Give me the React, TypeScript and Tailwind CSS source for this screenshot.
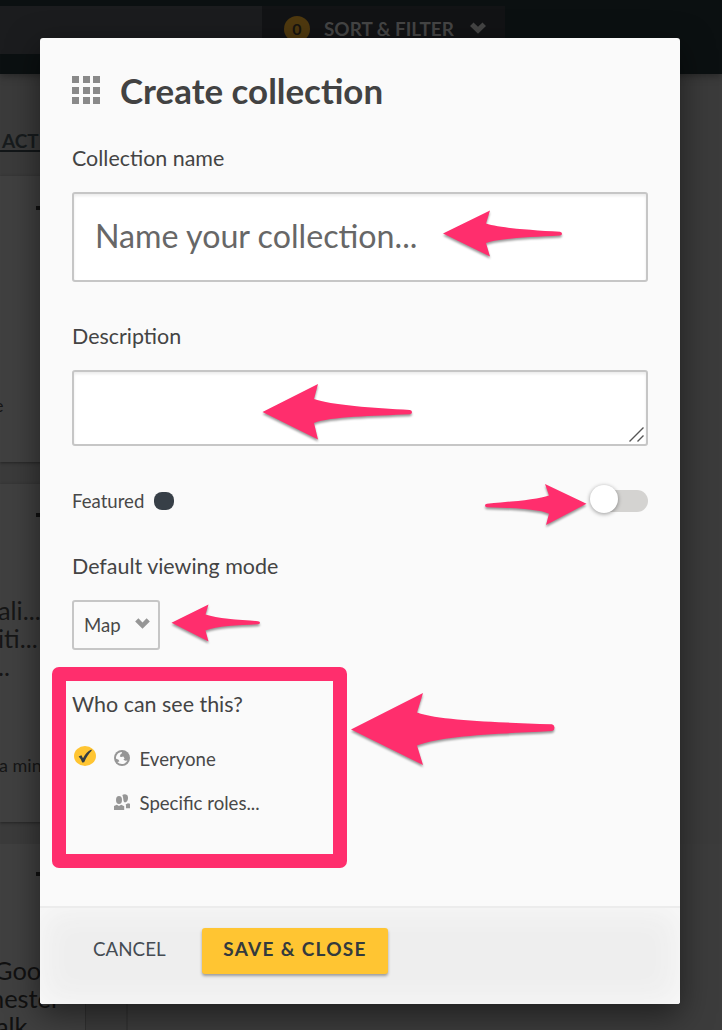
import type { ReactNode } from "react";

const arrowDrop = "absolute overflow-visible drop-shadow-[0_2px_1px_rgba(0,0,0,0.4)]";

function Arrow({ d, className }: { d: string; className: string }) {
  return (
    <svg className={`${arrowDrop} ${className}`} aria-hidden="true">
      <path d={d} fill="#ff2e6d" />
    </svg>
  );
}

function Label({ children, className = "" }: { children: ReactNode; className?: string }) {
  return <div className={`h-7 whitespace-nowrap text-[21.45px] leading-7 text-[#444] ${className}`}>{children}</div>;
}

function Chevron({ className }: { className: string }) {
  return (
    <svg viewBox="0 0 16 12" className={className}>
      <path d="M0 3.9 3.5 0.4 8 4.8 12.5 0.4 16 3.9 8 11.8Z" fill="currentColor" />
    </svg>
  );
}

function Backdrop() {
  return (
    <div className="flex h-full flex-col bg-[#3b3b3b] text-[#161616]">
      <header className="flex h-[74px] shrink-0 bg-[#0b1011] pt-[6px] shadow-[0_2px_8px_rgba(0,0,0,0.35)]">
        <div className="h-12 w-[262px] bg-[#1b1c1e]" />
        <div className="flex h-12 w-[243px] items-center bg-[#121315] pb-[3px] pl-[22px] text-[#454545]">
          <span className="flex h-[26px] w-[26px] items-center justify-center rounded-full bg-[#4f390f] text-[16px] font-bold text-[#171410]">0</span>
          <span className="ml-[14px] whitespace-nowrap pt-[2px] text-[18.9px] font-bold">SORT &amp; FILTER</span>
          <Chevron className="mb-[2px] ml-[16px] h-3 w-4" />
        </div>
      </header>
      <div className="h-[102px] shrink-0 pt-[56px]">
        <div className="h-[22px] w-[86px] border-b-2 border-[#121618] pl-[2px] text-[19px] font-bold leading-[22px] text-[#171b1d]">ACT</div>
      </div>
      <section className="h-[286px] w-[86px] shrink-0 bg-[#404040] pt-[30px] shadow-[0_1px_3px_rgba(0,0,0,0.4)]">
        <div className="ml-9 h-1 w-6 bg-[#111]" />
        <div className="-ml-[6px] mt-[183px] text-[18px] leading-6">e</div>
      </section>
      <section className="mt-[22px] h-[338px] w-[86px] shrink-0 bg-[#404040] pt-[29px] shadow-[0_1px_3px_rgba(0,0,0,0.4)]">
        <div className="ml-9 h-1 w-6 bg-[#111]" />
        <div className="mt-[79px] whitespace-nowrap text-[25.4px] leading-7">
          <div className="-ml-[2px]">ali...</div>
          <div className="-ml-[2px]">iti...</div>
          <div className="-ml-[8px]">...</div>
        </div>
        <div className="-ml-px mt-[73px] whitespace-nowrap text-[18px] leading-6">a min</div>
      </section>
      <div className="mt-[22px] flex h-[186px] shrink-0">
        <section className="w-[86px] shrink-0 border-r border-[#303030] bg-[#404040] pt-[28px]">
          <div className="ml-9 h-1 w-6 bg-[#111]" />
          <div className="mt-[80px] whitespace-nowrap text-[25.4px] leading-7 text-[#111]">
            <div className="-ml-[6px]">Goo</div>
            <div className="-ml-[10px]">hester</div>
            <div className="-ml-[4px]">alk</div>
          </div>
        </section>
        <section className="ml-[40px] flex-1 border-l-2 border-[#343434] bg-[#3c3c3c]" />
      </div>
    </div>
  );
}

export default function App() {
  return (
    <div className="relative h-[1030px] w-[722px] overflow-hidden font-['Lato','Carlito',sans-serif]">
      <Backdrop />
      <div role="dialog" className="absolute left-10 top-[38px] flex h-[966px] w-[640px] flex-col rounded-[3px] bg-[#fafafa] shadow-[0_10px_32px_rgba(0,0,0,0.5)]">
        <div className="flex h-[868px] flex-col px-8">
          <div className="mt-[30px] flex h-12 items-center">
            <div className="mb-1 grid grid-cols-3 gap-[3.5px]">
              {Array.from({ length: 9 }, (_, i) => (
                <span key={i} className="h-[7px] w-[7px] bg-[#898989]" />
              ))}
            </div>
            <h1 className="mb-[2px] ml-5 whitespace-nowrap text-[34.9px] font-bold leading-[48px] text-[#424242]">Create collection</h1>
          </div>

          <Label className="mt-[28px]">Collection name</Label>
          <div className="mt-5 flex h-[90px] items-center rounded-[3px] border-2 border-[#c6c6c6] bg-white pb-[2px] pl-[21px] text-[32.2px] text-[#676767] shadow-[inset_0_2px_3px_rgba(0,0,0,0.08)]">
            Name your collection...
          </div>

          <Label className="mt-10">Description</Label>
          <div className="mt-5 flex h-[76px] items-end justify-end rounded-[3px] border-2 border-[#c6c6c6] bg-white p-[2px] shadow-[inset_0_2px_3px_rgba(0,0,0,0.08)]">
            <svg viewBox="0 0 15 15" className="h-[15px] w-[15px]" stroke="#555" strokeWidth="1.4">
              <path d="M0.5 14.5 14.5 0.5M8.5 14.5 14.5 8.5" />
            </svg>
          </div>

          <div className="mt-[41px] flex h-7 items-center text-[18.6px] text-[#484848]">
            <span className="pt-[2px]">Featured</span>
            <span className="ml-[10px] h-[18px] w-5 rounded-[8px] bg-[#373f47]" />
            <div className="ml-auto flex h-[22px] w-14 items-center rounded-full bg-[#d4d3d1]">
              <span className="-ml-[2px] -mt-[4px] h-7 w-7 shrink-0 rounded-full bg-white shadow-[0_1px_4px_rgba(0,0,0,0.4)]" />
            </div>
          </div>

          <Label className="mt-[37px]">Default viewing mode</Label>
          <div className="mt-5 flex h-[50px] w-[88px] items-center rounded-[3px] border-2 border-[#c6c6c6] pl-[10px] text-[18.6px] text-[#484848]">
            <span className="pt-[2px]">Map</span>
            <Chevron className="mb-1 ml-[14px] h-[11px] w-[15px] text-[#969696]" />
          </div>

          <Label className="mt-10">Who can see this?</Label>
          <div className="mt-[19px] text-[18.6px] text-[#484848]">
            <div className="flex h-11 items-center">
              <span className="mb-[6px] ml-[2px] flex h-5 w-[22px] items-center justify-center rounded-[50%] bg-[#ffc532]">
                <svg viewBox="0 0 14 14" className="h-[14px] w-[14px]">
                  <path d="M0.6 7.4 3.4 6.2 5 9.2C7 5.4 9.6 2 13.4.5L13.8 1.4C10.7 4.5 8.2 8.4 6.2 13.2L4.2 13.4C3.5 11.2 2.4 9.2 .6 7.4Z" fill="#333d44" />
                </svg>
              </span>
              <svg viewBox="0 0 16 16" className="mb-[3px] ml-[18px] h-4 w-4">
                <circle cx="8" cy="8" r="8" fill="#969696" />
                <path d="M7.6 2 8.2 3 6.6 4.2 5.8 6.4 7.2 7 9.4 6.6 10.6 8.6 9.4 9.8 11.4 10.8 13.4 10.6C12.2 13 10.2 14 8 14 6 14 4.4 13.2 3.4 12L5.4 11.6 4.6 9.8 2.1 8.8C1.6 5.4 4.2 2.2 7.6 2Z" fill="#fafafa" />
              </svg>
              <span className="ml-[9.5px] pt-[2px]">Everyone</span>
            </div>
            <div className="flex h-11 items-center">
              <svg viewBox="0 0 16 16" className="mb-[3px] ml-[42px] h-4 w-4" fill="#969696">
                <ellipse cx="5" cy="6" rx="3" ry="4" />
                <path d="M8.3 1C10 0 13.8-.4 14 3.4 14.2 6.5 12.8 8.4 11 8.4 9.6 8 9.4 6.8 9.3 5.2 9.2 3.5 8.7 2 8.3 1Z" />
                <path d="M0 16V12L2.8 10.8 5 12 7.2 10.8 10.2 12.2V16ZM12 14.2V11.4L11.6 10.6 14 9.2 16 9.8V14.2Z" />
              </svg>
              <span className="ml-[9.5px] whitespace-nowrap pt-[2px]">Specific roles...</span>
            </div>
          </div>
        </div>

        <footer className="flex h-[98px] items-start rounded-b-[3px] border-t-2 border-[#ececec] bg-[#eeeeee] pl-[53px] pt-5 shadow-[inset_0_0_32px_#fafafa]">
          <button className="h-[43px] w-[73px] whitespace-nowrap text-left text-[18.8px] text-[#454c53]">CANCEL</button>
          <button className="ml-9 h-[46px] w-[186px] whitespace-nowrap rounded-[3px] bg-[#ffc532] pb-1 text-[19px] font-bold tracking-[1.3px] text-[#343a3d] shadow-[0_2px_3px_rgba(0,0,0,0.35)]">
            SAVE &amp; CLOSE
          </button>
        </footer>
      </div>

      <div className="absolute left-[52px] top-[667px] h-[201px] w-[295px] rounded-[7px] border-[14px] border-[#ff2e6d]" />
      <Arrow className="left-[443px] top-[210px] h-[48px] w-[119px]" d="M0 23.5 47 0.5 43 13.5C56 18 88 20 117 21.7Q119 22 119 23.7 119 25.2 117 25.4C88 27 56 28 43 33L47 46.5Z" />
      <Arrow className="left-[262px] top-[383px] h-[57px] w-[150px]" d="M0.5 29 56 1 52 16C68 22 112 25 148 27Q150 27.5 150 29.3 150 31 148 31.3C112 33 68 33.5 52 40L56 56.5Z" />
      <Arrow className="left-[485px] top-[484px] h-[42px] w-[102px]" d="M101.5 19.7 60 0 64 11.5C54 15.5 27 17.5 2 19.7Q0 20 0 21.5 0 23 2 23.2C27 24 54 25 64 29.7L61 41Z" />
      <Arrow className="left-[171px] top-[604px] h-[39px] w-[89px]" d="M0.5 18.7 37.5 0.5 34.5 10.5C46 14.5 66 15.5 87 17.2Q89 17.5 89 18.7 89 20 87 20.3C66 21.5 46 22 34.5 26.5L37.5 37.5Z" />
      <Arrow className="left-[351px] top-[692px] h-[73px] w-[204px]" d="M0 37.5 72 1 66 20.5C91 29 145 30 201 32.3Q203.5 33 203.5 35.7 203.5 38.5 201 39C145 42 91 43.5 66 53.5L72 73Z" />
    </div>
  );
}
